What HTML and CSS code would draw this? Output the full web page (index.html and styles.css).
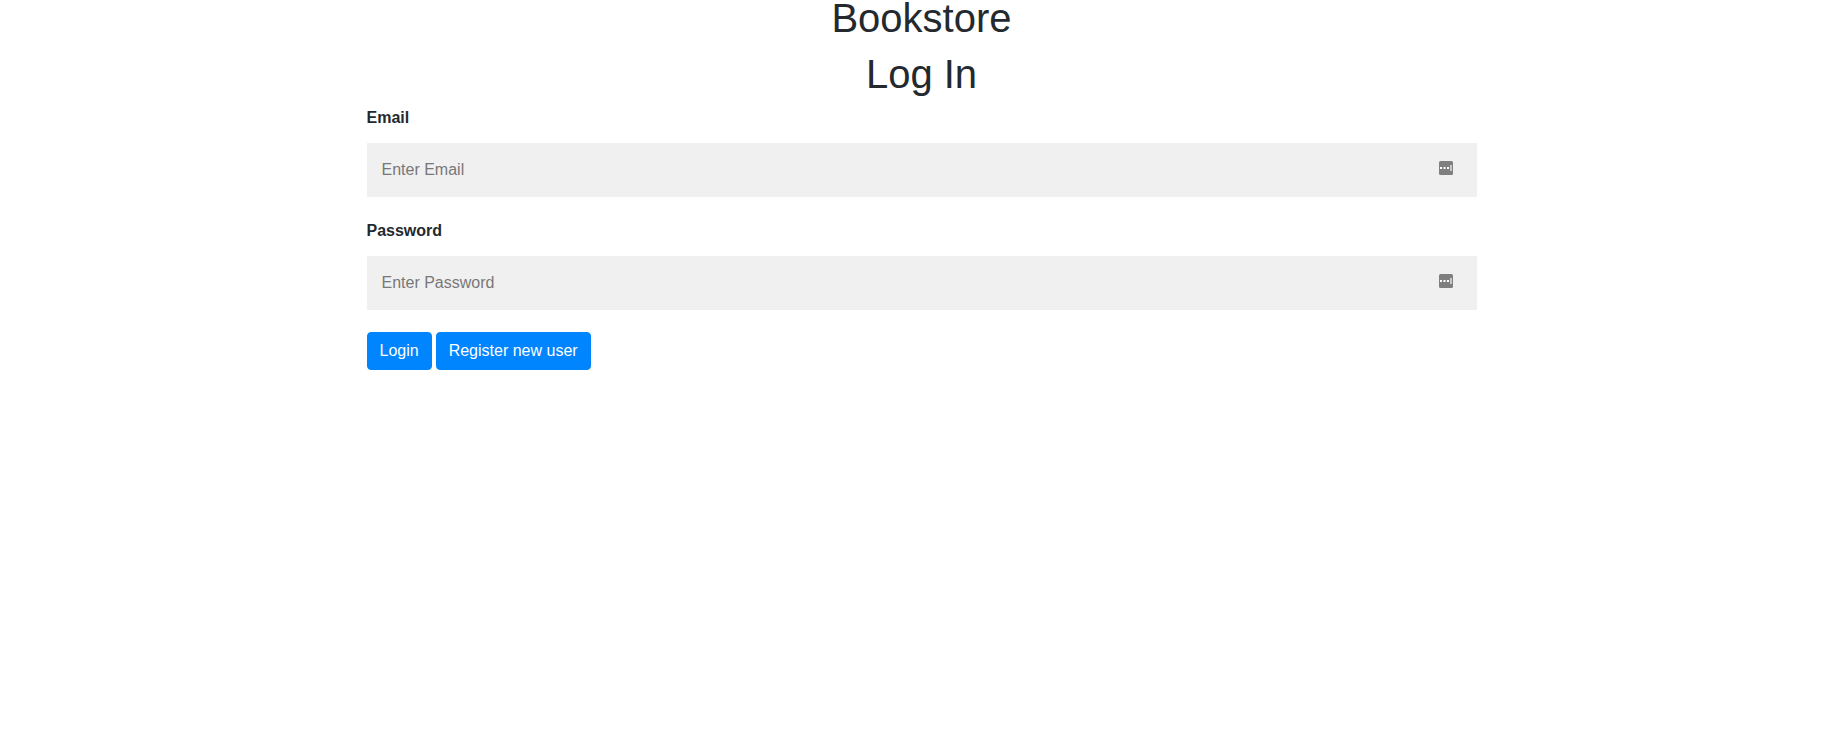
FILE: index.html
```html
<!DOCTYPE html>
<html lang="en">
<head>
<meta charset="utf-8">
<title>Bookstore</title>
<link rel="stylesheet" href="styles.css">
</head>
<body>
<main class="container">
  <h1 class="title">Bookstore</h1>
  <h1 class="title">Log In</h1>
  <form class="login-form">
    <div class="field">
      <label class="label" for="email">Email</label>
      <div class="control">
        <input class="input" id="email" type="text" placeholder="Enter Email">
        <svg class="fill-icon" viewBox="0 0 14 14" aria-hidden="true">
          <rect width="14" height="14" rx="1.5" fill="#7f7f7f"/>
          <path d="M1 6h2v2H1zM4.500 6h2v2h-2zM8 6h2v2H8z" fill="#fff"/>
          <path d="M11 4h2v6h-2z" fill="#c8c8c8"/>
        </svg>
      </div>
    </div>
    <div class="field">
      <label class="label" for="password">Password</label>
      <div class="control">
        <input class="input" id="password" type="password" placeholder="Enter Password">
        <svg class="fill-icon" viewBox="0 0 14 14" aria-hidden="true">
          <rect width="14" height="14" rx="1.5" fill="#7f7f7f"/>
          <path d="M1 6h2v2H1zM4.500 6h2v2h-2zM8 6h2v2H8z" fill="#fff"/>
          <path d="M11 4h2v6h-2z" fill="#c8c8c8"/>
        </svg>
      </div>
    </div>
    <div class="actions">
      <button class="button" type="submit">Login</button>
      <button class="button" type="button">Register new user</button>
    </div>
  </form>
</main>
</body>
</html>
```
FILE: styles.css
```css
* {
  box-sizing: border-box;
}

body {
  margin: 0;
  padding-left: 3px;
  background: #fff;
  color: #24292e;
  font: 16px/24px "Liberation Sans", Arial, sans-serif;
}

.container {
  max-width: 1140px;
  margin: 0 auto;
  padding: 0 15px;
}

.title {
  margin: 0 0 20px;
  font-size: 40px;
  font-weight: 400;
  line-height: 36px;
  text-align: center;
}

.title + .title {
  margin-bottom: 14px;
}

.field {
  margin-bottom: 22px;
}

.label {
  display: block;
  margin-bottom: 13px;
  font-weight: 700;
}

.control {
  position: relative;
}

.input {
  display: block;
  width: 100%;
  padding: 15px;
  border: 0;
  border-radius: 0;
  background: #f0f0f0;
  color: inherit;
  font: inherit;
}

.input::placeholder {
  color: #787878;
}

.fill-icon {
  position: absolute;
  top: 18px;
  right: 24px;
  width: 14px;
  height: 14px;
}

.actions {
  display: flex;
  gap: 4px;
}

.button {
  padding: 6px 12px;
  border: 1px solid #0085ff;
  border-radius: 4px;
  background: #0085ff;
  color: #fff;
  font: inherit;
  cursor: pointer;
}
```
